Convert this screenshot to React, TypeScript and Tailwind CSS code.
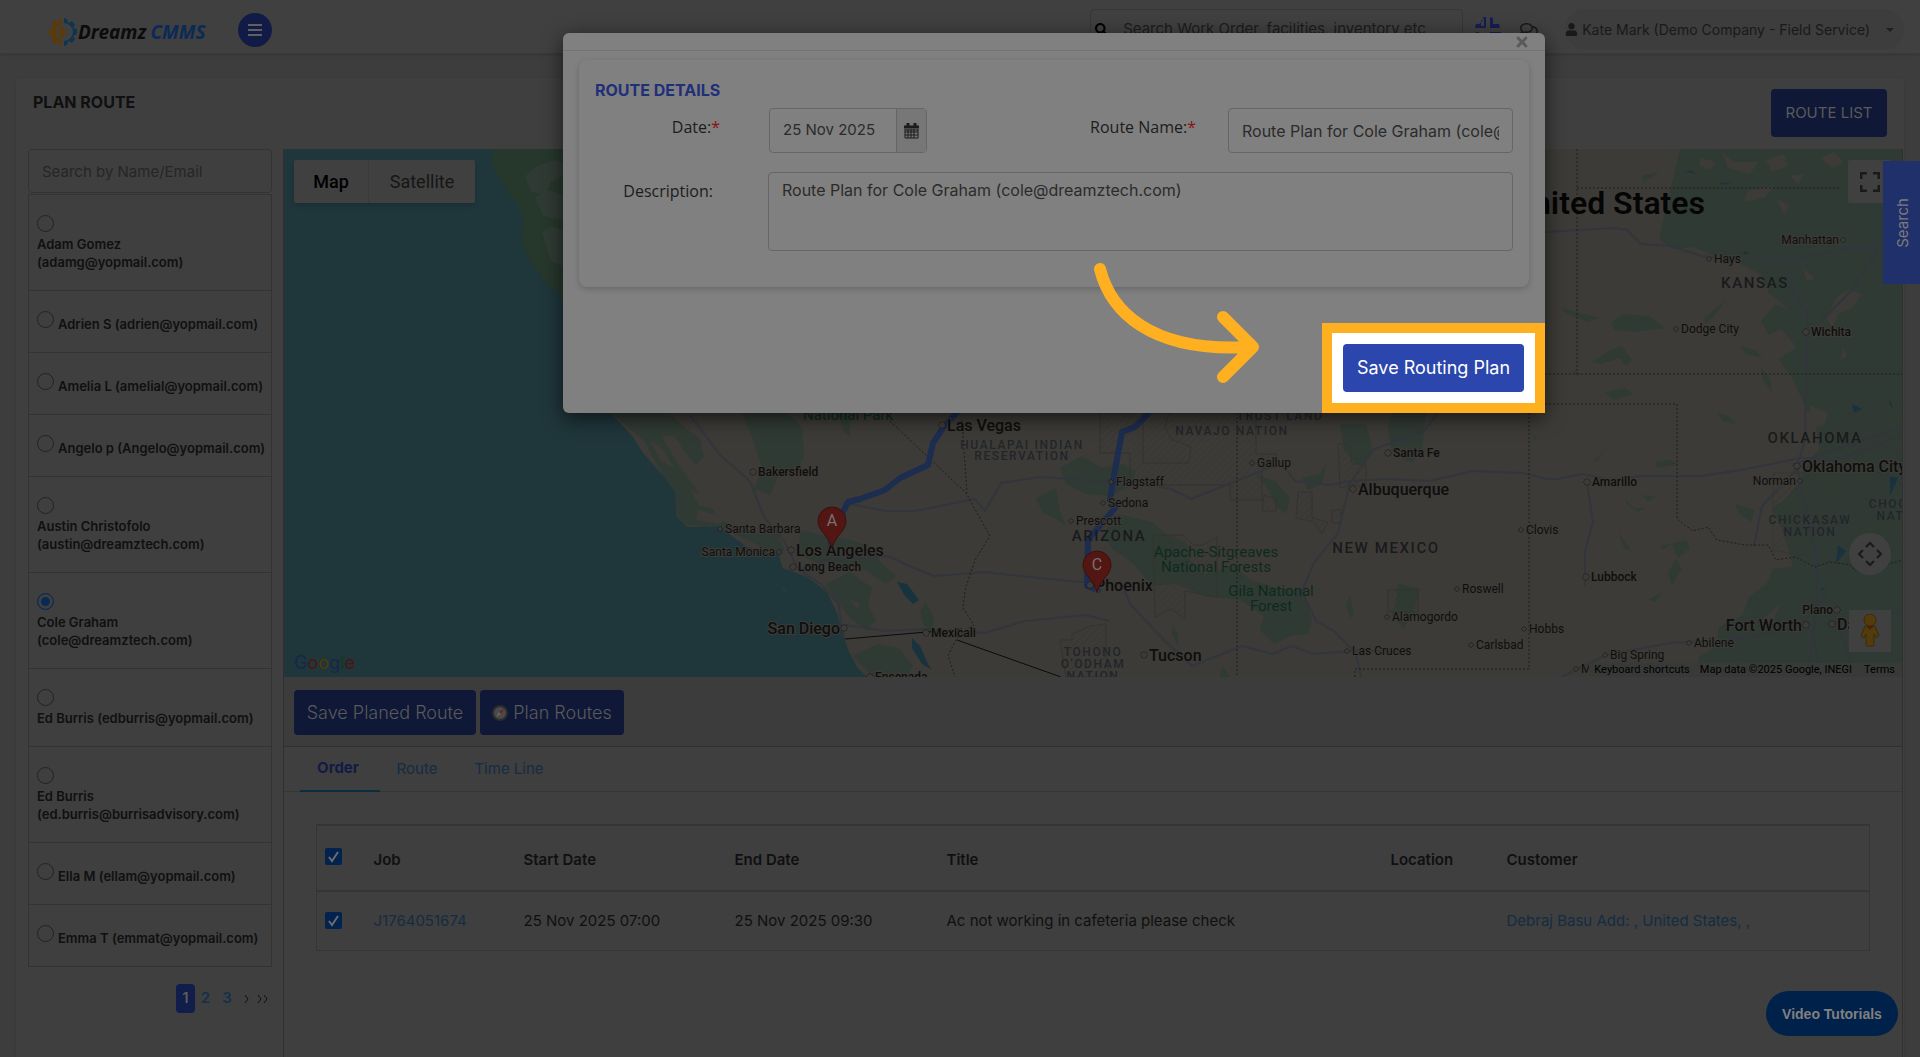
import { FC, ReactNode } from 'react';
import { FaRegComments, FaSearch, FaTimes, FaUser } from 'react-icons/fa';

type Person = { id: string; lines: string[]; stacked?: boolean; selected?: boolean };

const people: Person[] = [
  { id: 'adam', lines: ['Adam Gomez', '(adamg@yopmail.com)'], stacked: true },
  { id: 'adrien', lines: ['Adrien S (adrien@yopmail.com)'] },
  { id: 'amelia', lines: ['Amelia L (amelial@yopmail.com)'] },
  { id: 'angelo', lines: ['Angelo p (Angelo@yopmail.com)'] },
  { id: 'austin', lines: ['Austin Christofolo', '(austin@dreamztech.com)'], stacked: true },
  { id: 'cole', lines: ['Cole Graham', '(cole@dreamztech.com)'], stacked: true, selected: true },
  { id: 'edburris', lines: ['Ed Burris (edburris@yopmail.com)'], stacked: true },
  { id: 'ed', lines: ['Ed Burris', '(ed.burris@burrisadvisory.com)'], stacked: true },
  { id: 'ella', lines: ['Ella M (ellam@yopmail.com)'] },
  { id: 'emma', lines: ['Emma T (emmat@yopmail.com)'] },
];

// x is the marker centre; labels sit right of it, or left when `left` is set
type City = { x: number; y: number; name: string; size: number; bold?: boolean; left?: boolean };

const cities: City[] = [
  { x: 942, y: 425, name: 'Las Vegas', size: 16, bold: true },
  { x: 753, y: 472, name: 'Bakersfield', size: 12, bold: true },
  { x: 720, y: 529, name: 'Santa Barbara', size: 12 },
  { x: 779, y: 552, name: 'Santa Monica', size: 12, left: true },
  { x: 791, y: 550, name: 'Los Angeles', size: 16, bold: true },
  { x: 793, y: 567, name: 'Long Beach', size: 12, bold: true },
  { x: 844, y: 628, name: 'San Diego', size: 16, bold: true, left: true },
  { x: 926, y: 633, name: 'Mexicali', size: 12, bold: true },
  { x: 870, y: 677, name: 'Ensenada', size: 12, bold: true },
  { x: 1111, y: 482, name: 'Flagstaff', size: 12 },
  { x: 1103, y: 503, name: 'Sedona', size: 12 },
  { x: 1071, y: 521, name: 'Prescott', size: 12 },
  { x: 1090, y: 585, name: 'Phoenix', size: 16, bold: true },
  { x: 1144, y: 655, name: 'Tucson', size: 16, bold: true },
  { x: 1252, y: 463, name: 'Gallup', size: 12 },
  { x: 1388, y: 453, name: 'Santa Fe', size: 12, bold: true },
  { x: 1353, y: 489, name: 'Albuquerque', size: 16, bold: true },
  { x: 1457, y: 589, name: 'Roswell', size: 12 },
  { x: 1387, y: 617, name: 'Alamogordo', size: 12 },
  { x: 1347, y: 651, name: 'Las Cruces', size: 12 },
  { x: 1471, y: 645, name: 'Carlsbad', size: 12 },
  { x: 1524, y: 629, name: 'Hobbs', size: 12 },
  { x: 1521, y: 530, name: 'Clovis', size: 12 },
  { x: 1587, y: 482, name: 'Amarillo', size: 12, bold: true },
  { x: 1586, y: 577, name: 'Lubbock', size: 12, bold: true },
  { x: 1605, y: 655, name: 'Big Spring', size: 12 },
  { x: 1576, y: 669, name: 'Mi', size: 12 },
  { x: 1689, y: 643, name: 'Abilene', size: 12 },
  { x: 1806, y: 625, name: 'Fort Worth', size: 16, bold: true, left: true },
  { x: 1832, y: 624, name: 'Dallas', size: 16, bold: true },
  { x: 1837, y: 610, name: 'Plano', size: 12, bold: true, left: true },
  { x: 1797, y: 466, name: 'Oklahoma City', size: 16, bold: true },
  { x: 1800, y: 481, name: 'Norman', size: 12, left: true },
  { x: 1709, y: 259, name: 'Hays', size: 12 },
  { x: 1843, y: 240, name: 'Manhattan', size: 12, left: true },
  { x: 1676, y: 329, name: 'Dodge City', size: 12 },
  { x: 1806, y: 332, name: 'Wichita', size: 12, bold: true },
];

const regions = [
  { x: 1755, y: 288, name: 'KANSAS', size: 15, fill: '#191a1c' },
  { x: 1815, y: 443, name: 'OKLAHOMA', size: 15, fill: '#191a1c' },
  { x: 1386, y: 553, name: 'NEW MEXICO', size: 15, fill: '#191a1c' },
  { x: 1109, y: 541, name: 'ARIZONA', size: 15, fill: '#191a1c' },
  { x: 1022, y: 449, name: 'HUALAPAI INDIAN', size: 12, fill: '#22252a' },
  { x: 1022, y: 460, name: 'RESERVATION', size: 12, fill: '#22252a' },
  { x: 1232, y: 435, name: 'NAVAJO NATION', size: 12, fill: '#22252a' },
  { x: 1280, y: 420, name: 'TRUST LAND', size: 12, fill: '#22252a' },
  { x: 1093, y: 656, name: 'TOHONO', size: 12, fill: '#22252a' },
  { x: 1093, y: 668, name: "O'ODHAM", size: 12, fill: '#22252a' },
  { x: 1093, y: 680, name: 'NATION', size: 12, fill: '#22252a' },
  { x: 1810, y: 524, name: 'CHICKASAW', size: 12, fill: '#22252a' },
  { x: 1810, y: 536, name: 'NATION', size: 12, fill: '#22252a' },
  { x: 1903, y: 508, name: 'CHOCTAW', size: 12, fill: '#22252a' },
  { x: 1903, y: 520, name: 'NATION', size: 12, fill: '#22252a' },
];

const forests = [
  { x: 1216, y: 557, name: 'Apache-Sitgreaves' },
  { x: 1216, y: 572, name: 'National Forests' },
  { x: 1271, y: 596, name: 'Gila National' },
  { x: 1271, y: 611, name: 'Forest' },
];

const Pin: FC<{ x: number; y: number; letter: string }> = ({ x, y, letter }) => (
  <g>
    <path
      d={`M${x} ${y + 27}C${x - 3} ${y + 15} ${x - 14} ${y + 10} ${x - 14} ${y}a14 14 0 0 1 28 0C${x + 14} ${y + 10} ${x + 3} ${y + 15} ${x} ${y + 27}z`}
      fill="#531612"
      stroke="#3a0f0c"
    />
    <text x={x} y={y + 5} textAnchor="middle" fontSize="16" fill="#727272">
      {letter}
    </text>
  </g>
);

const MapDrawing: FC = () => (
  <svg
    className="block w-full h-[528px] bg-[#3d3b37] font-['Roboto',sans-serif]"
    viewBox="284 149 1619 528"
    preserveAspectRatio="xMinYMin slice"
    role="img"
    aria-label="Route map"
  >
    <defs>
      <pattern id="hatch" width="5" height="5" patternUnits="userSpaceOnUse" patternTransform="rotate(45)">
        <path d="M0 0v5" stroke="#34342f" strokeWidth="1" />
      </pattern>
    </defs>

    {/* forests and farmland */}
    <g fill="#303a34">
      <path d="M490 149h80v270l-60-130z" fill="#26372c" />
      <path d="M525 176l12-10 18-6 8 2v14l-12 6-6 12-14-2zM535 198l12-8 16 4v26l-20-4zM542 232l10-6 11 4v36l-12-4z" />
      <path d="M612 413h58l14 14 16 12 4 18-8 8-12-14-10-16-12 2 18 30 22 30 20 24 28 12 26-2 8 18-6 14-20-18-34-16-40-4-16-14-4-34-20-36z" />
      <path d="M742 413h46l14 14 2 30-10 18-16 2-8 18-16-6 8-22-10-30zM838 413h12v24l-6-6zM800 530l26 6 24 4 24 8 6 14 16 14-10 8-20-14-22-6-28-2-18-8zM826 584l24-12 22 16-4 18 8 14-10 10-18-14-10-14zM853 656l24-12 22 4 14 18-6 11h-34zM926 602l8 16-2 12-8-4-4-14z" />
      <path d="M1060 468l22-12 20 12 22-4 12 8-6 14-20 10-24-2-20-10zM1036 498l20-10 4 24 6 14-12-8-12-6zM1118 514l34 8 14 12 20 8 4 18 16 14 28-8 16 14 28 8 26 2 8 30-4 14-18 2-16 8-14-14 4-14-24-16-36-4-28-12-24 2-18-22-20-14-12-14zM1340 424h26l6 24-6 14-10 2-12-14zM1392 413h34l-4 38-10 12-20-10-4-24zM1398 583l22 6-6 20-10 20-12-14 4-14zM1350 596l4 18-4 4-4-14zM1256 474l20 8 14 16-4 16-10-8-6-14zM1302 478l18-4 6-10-4 20-14 6zM1172 624l6 10v12l-6-12zM1222 666l8 11h-10z" />
      <path d="M1680 149h223v528h-206l2-20 18-12 2-18 24-12 6-18 18-14 6-14 20-2-6-22-8-24-8-12 12-8 16-18 6-16 14-18-4-28-10-14-12-28-14-20 18-12-16-18-12 6-8-14 14-16 14 4-20-16-8-18-22-12-22-6-24-10-20 2-14-10z" />
      <path d="M1642 176l18-4-16 10zM1660 228l22-6-8 8 8 4-20-2zM1562 308l38 10-12 4-24-10zM1611 322l12-8 26 2 16 12-30 4-20-2zM1592 362l18-12 12-4 10 14-6 6-6-8-20 6zM1605 392l20-4 8 6-20 6zM1704 318l22-18-12 16-8 8zM1740 346l16 4 6 8-16-4zM1760 366l10 12 2 14-8-10zM1655 462l14-2 10 4-22 4zM1626 500l8 8 10 0-6 4-12-8zM1642 495l14 2-8 4zM1618 532l14 20-8-4zM1660 546l26-6 4 8-12 10-6-14-10 6zM1648 600l14-8-6 10zM1716 412l12 4 8 8-12-2zM1735 504l20 6-4 12-12-8zM1572 370l10 4-6 2zM1530 432l8 6-4 2zM1594 460l10-10-8 12zM1668 573l8-14 6 10-10 16z" />
    </g>

    {/* clearings inside the farmland */}
    <g fill="#3d3b37">
      <path d="M1700 158l16 4-6 8-10-4zM1722 152l12 10 24 0-8 12-22-6zM1766 160l18-6 4 12-16 6zM1820 158l14-6 10 10-12 6zM1748 190l26-4-10 12-20 4zM1790 176l14-2-6 10zM1776 198l14 8-6 8zM1803 268l12 10-8 4zM1826 316l12-20 10-6 14 4-10 14-14 6-6 14zM1843 346l4 10-6 4zM1810 405l18 8-4 12-14 4zM1784 456l10 8-2 6zM1762 620l18-16-8 20zM1738 661l10 6-8 4z" />
      <path d="M650 440l14 10 10 18-14-8zM690 490l14 6 8 12-12-2zM698 510l30 8-8 6-24-4zM850 600l10 4-2 6z" />
    </g>

    {/* tribal lands */}
    <g fill="url(#hatch)" stroke="#33332f">
      <path d="M1100 413v40h30v32h100v15h32v-32h14v-14h-20v-41zM1143 413v50h46l2-16-20-8-6-12 4-14zM1153 535h30l10 10h10l14-8v60l-32-6v28l-14-10-16 8z" />
      <path d="M1060 640h12v-6l18-8 16-2v34l4 19h-44l-4-24z" />
      <path d="M1338 444h12l2 20h14v26l-12-6-14 4zM1298 492h14v26l16 4-6 12-8-12-18-4zM1264 495l12 4v12h-14zM1332 510h9v13h-9zM1388 590h30v22h-30z" />
    </g>
    <path d="M1773 473h130v75l-60 16-70-14z" fill="url(#hatch)" stroke="#333833" />
    <path d="M1841 402h62v70h-62zM1834 425v75" fill="url(#hatch)" stroke="#333833" />

    {/* ocean and lakes */}
    <path
      d="M284 149h209l-1 16 13 23 13 17 5 17-2 18 7 18 10 14 10 13 12 10 20 60 33 60 20 22 10 16 22 25 10 14 1 25 11 10h33l13 10 14 10 30 5 6 16 24 9 20 15 10 21 6 20 5 17 9 17 11 11H284z"
      fill="#1f363b"
    />
    <path d="M700 553l6 2-6 3zM780 585l8 6-4 3zM775 611l8 10-4-3z" fill="#2a3a33" />
    <g fill="#18333d">
      <path d="M897 582l10 2 12 16-6 4-8-8zM912 638l8 8 8 18 4 6-10-6-10-16zM1743 254h6l-4-3zM1684 171l12 3-4-3zM1720 183l12-1-10 3zM1852 404l10 5-8 4zM1890 476l8 2-8 18zM1838 545l8 6-10 12zM1820 590l6-4-4 5zM1890 400l3 8-4-4z" />
    </g>

    {/* highways */}
    <g fill="none" stroke="#32353c" strokeWidth="2">
      <path d="M690 415l30 40 30 26 14 36 20 24 14 28 24 16 16 18 6 34M845 503l40 8 30 0 60-12 10 12 16-28 40-6 60 4 30 0 40 8 20 10 40-16 50-20 14 18 36 4 18-4 40-2 40 2 44-10 50 2 24 6h10l26-5 28 6 30-4h60l40-6 60-12 34 2 40-14 30-12" />
      <path d="M798 570l30-10 60-4 26 12 20 8 50-4 54 6 44 4 40 2 8 20 34 36 28 26 50-20 30 8 20-8 22 8 40-3 44 0M845 625l40 6 40-2 60 4 40-12 60-6 24 6M1358 655l-24-24-18-10-14-30 12-28 24-30 12-50 24-34 50-18 20-26v-18M1355 650l6 27M1587 482l6 40-8 30v34M1562 677l44-22 64-12 70-4 60-12 30-40" />
      <path d="M1545 232l70-4 12 2 14 14 30 2 30 10 40 4h50l60-12h30M1792 262v30l15 18-2 130-8 26 8 40 12 50v50l-8 60M1820 322l30-30 34-50M1800 466l-38 40-8 40M1792 465l40-14 70-24M1810 625l40-4 53-10M1812 630l10 47M1840 628l16 49" />
    </g>
    <path d="M845 639l117-10M957 640l104 37" stroke="#0b0b0b" strokeWidth="1" fill="none" />

    {/* state borders */}
    <g fill="none" stroke="#1e1e1c" strokeDasharray="2 2">
      <path d="M1577 149v225M1577 188h262M1529 374h374M1529 404h148v115l16 12 15-4 9 13 28 5h23l8 15 19-3 20 10 15-5 20 3 5 5 30-5 18-5M1529 413v256h-174v8M1237 413v264M890 421l76 72 24 43-15 24-10 30-2 18 11 17-14 8-12 22 7 22M962 420l5 73" />
    </g>

    {/* planned route */}
    <g fill="none" stroke="#1c2d50" strokeWidth="6" strokeLinecap="round" strokeLinejoin="round">
      <path d="M831 546v-14l12-20 5-10 12-3 25-9 15-12 28-13 5-22 10-15 14-16" />
      <path d="M1150 412l-15 15-13 5-7 38-5 30 5 8-27 32-1 46 11 4" />
    </g>

    <g stroke="#3d3b37" strokeWidth="2" paintOrder="stroke" fill="#0e0e0e">
      {cities.map((c) => (
        <g key={c.name}>
          <circle cx={c.x} cy={c.y} r={c.bold ? 3 : 2} fill="#3d3b37" stroke="#0e0e0e" strokeWidth="1" />
          <text
            x={c.left ? c.x - 4 : c.x + 5}
            y={c.y + (c.size > 12 ? 6 : 4)}
            fontSize={c.size}
            fontWeight={c.bold ? 500 : 400}
            textAnchor={c.left ? 'end' : 'start'}
          >
            {c.name}
          </text>
        </g>
      ))}
    </g>
    <g textAnchor="middle" className="tracking-widest">
      {regions.map((r) => (
        <text key={r.name + r.x + r.y} x={r.x} y={r.y} fontSize={r.size} fontWeight="500" fill={r.fill}>
          {r.name}
        </text>
      ))}
    </g>
    <g textAnchor="middle" fontSize="15" fill="#0d2a1e">
      {forests.map((f) => (
        <text key={f.name} x={f.x} y={f.y}>
          {f.name}
        </text>
      ))}
      <text x="848" y="420">National Park</text>
    </g>
    <text x="1705" y="214" textAnchor="end" fontSize="32" fontWeight="600" fill="#050505">
      United States
    </text>

    <Pin x={832} y={521} letter="A" />
    <Pin x={1097} y={565} letter="C" />
  </svg>
);

const MapPanel: FC = () => (
  <div className="relative overflow-hidden font-['Roboto',sans-serif]">
    <MapDrawing />
    <div className="absolute left-[10px] top-[11px] flex h-[43px] rounded-xs bg-[#404040] text-lg shadow-md">
      <button className="w-[75px] border-r border-[#3a3a3a] font-medium text-black">Map</button>
      <button className="w-[106px] text-[#161616]">Satellite</button>
    </div>
    <button aria-label="Toggle fullscreen view" className="absolute right-[11px] top-[11px] flex size-[43px] items-center justify-center rounded-xs bg-[#404040]">
      <svg width="20" height="20" viewBox="0 0 20 20" fill="none" stroke="#1a1a1a" strokeWidth="3">
        <path d="M1 7V1h6M13 1h6v6M19 13v6h-6M7 19H1v-6" />
      </svg>
    </button>
    <button aria-label="Map camera controls" className="absolute right-[11px] top-[384px] flex size-[42px] items-center justify-center rounded-full bg-[#404040]">
      <svg width="26" height="26" viewBox="0 0 26 26" fill="none" stroke="#1a1a1a" strokeWidth="2">
        <path d="M9 6l4-4 4 4M9 20l4 4 4-4M6 9l-4 4 4 4M20 9l4 4-4 4" />
      </svg>
    </button>
    <button aria-label="Street View Pegman" className="absolute right-[11px] top-[461px] flex size-[42px] items-center justify-center bg-[#404040]">
      <svg width="20" height="34" viewBox="0 0 20 34">
        <path d="M5 12h10l4 10-3 2-2-4v12H6V20l-2 4-3-2z" fill="#523c0c" stroke="#3c2a08" />
        <path d="M6 12h8l-4 4z" fill="#4a200a" />
        <circle cx="10" cy="6" r="6" fill="#523c0c" stroke="#3c2a08" />
      </svg>
    </button>
    <div className="absolute left-[10px] bottom-[2px] font-['Inter',sans-serif] text-lg leading-6">
      <span className="text-[#17274b]">G</span>
      <span className="text-[#4a1512]">o</span>
      <span className="text-[#4f3a08]">o</span>
      <span className="text-[#17274b]">g</span>
      <span className="text-[#113a1c]">l</span>
      <span className="text-[#4a1512]">e</span>
    </div>
    <div className="absolute right-0 bottom-0 flex h-[14px] items-center bg-[#373a37] text-[11px] leading-[14px] text-black">
      <button className="px-[5px]">Keyboard shortcuts</button>
      <span className="px-[5px]">Map data ©2025 Google, INEGI</span>
      <a href="#terms" className="px-[7px]">Terms</a>
    </div>
  </div>
);

const Logo: FC = () => (
  <a href="#home" aria-label="Dreamz CMMS" className="flex items-center font-['Noto_Sans',sans-serif] text-[19px] leading-[30px] font-bold italic">
    <svg width="30" height="30" viewBox="0 0 30 30" fill="none">
      <path d="M14 1v28l-3-1-1-4-4 2-3-3 2-4-4-1v-5l4-1-2-4 3-4 4 2 1-4z" fill="#5b3a09" />
      <path d="M16 1l3 1 1 4 4-2 3 4-2 3 4 1v5l-4 2 2 3-3 4-4-2-1 4-3 1v-5a9 9 0 0 0 0-18z" fill="#0b3553" />
      <circle cx="14" cy="15" r="7" fill="#404040" />
      <path d="M7 15h9M12 11a4 4 0 1 1 0 8" stroke="#5b3a09" strokeWidth="3" />
    </svg>
    <span className="text-[#0c0c0c]">Dreamz</span>
    <span className="ml-1 text-[#0b2a55]">CMMS</span>
  </a>
);

const Header: FC = () => (
  <header className="flex h-[54px] items-start justify-between border-b border-[#393939] bg-[#404040] pl-12 pr-4 shadow-sm">
    <div className="flex items-center pt-[13px]">
      <div className="w-[190px] pt-1">
        <Logo />
      </div>
      <button aria-label="Toggle menu" className="flex size-[34px] items-center justify-center rounded-full bg-[#111b45]">
        <span className="flex w-[14px] flex-col gap-[3px]">
          <span className="h-[2px] bg-[#606060]" />
          <span className="h-[2px] bg-[#606060]" />
          <span className="h-[2px] bg-[#606060]" />
        </span>
      </button>
    </div>
    <div className="flex pt-[9px]">
      <label className="flex h-[41px] w-[373px] items-center gap-[15px] rounded border border-[#363636] px-1">
        <FaSearch className="size-[13px] flex-none text-black" />
        <span className="sr-only">Search</span>
        <input className="w-full text-[15px] outline-none placeholder:text-[#1c1c1c]" placeholder="Search Work Order, facilities, inventory etc" />
      </label>
      <svg className="mt-2 ml-3 size-[26px]" viewBox="0 0 26 26" fill="#131f52">
        <path d="M8 0h3v11H0c0-2 1-3 1-4h3c2-1 3-3 4-4zM6 4v5h3V1zM15 0l3 1v6h6l1 4H15zM1 15h3v3H1zM15 15h11v3h-8v7h-3zM8 18h3v7H8z" fillRule="evenodd" />
      </svg>
      <FaRegComments className="mt-3 ml-[19px] size-[18px] text-[#1a1a1a]" />
      <button className="ml-[27px] flex h-[41px] items-center rounded-full bg-[#3d3d3d] pr-[10px] text-[15px] text-[#191919]">
        <FaUser className="mr-1 size-[13px]" />
        <span className="text-[14px]">Kate Mark (Demo Company - Field Service)</span>
        <span className="ml-4 border-x-4 border-t-4 border-x-transparent border-t-[#1c2026]" />
      </button>
    </div>
  </header>
);

const PersonRow: FC<{ person: Person }> = ({ person }) => (
  <li className="border-b border-[#333333] px-2 pt-5 pb-[19px]">
    <label className={person.stacked ? 'flex flex-col gap-[3px]' : 'flex gap-[4px]'}>
      <input
        type="radio"
        name="person"
        defaultChecked={person.selected}
        className="size-[17px] flex-none appearance-none rounded-full border border-[#222222] checked:border-[#0b2a52] checked:bg-[#0b2a52] checked:shadow-[inset_0_0_0_3px_#3f3f3f]"
      />
      <span className={person.stacked ? 'text-[13px] leading-[18px] font-semibold' : 'pt-1 text-[13px] leading-[18px] font-semibold whitespace-nowrap'}>
        {person.lines.map((line) => (
          <span key={line} className="block">{line}</span>
        ))}
      </span>
    </label>
  </li>
);

const PeopleList: FC = () => (
  <aside className="w-[244px] flex-none">
    <input
      aria-label="Search by Name/Email"
      placeholder="Search by Name/Email"
      className="block h-[44px] w-full rounded border border-[#333333] px-[13px] text-[15px] outline-none placeholder:text-[#262626]"
    />
    <ul className="mt-px border-x border-t border-[#333333]">
      {people.map((person) => (
        <PersonRow key={person.id} person={person} />
      ))}
    </ul>
    <nav aria-label="Pages" className="mt-[17px] flex items-center justify-end pr-[2px] text-[15px] font-semibold text-[#15304a]">
      <button className="h-[29px] w-[19px] rounded bg-[#111d4a] text-[#5c5c5c]">1</button>
      <button className="w-[21px]">2</button>
      <button className="w-[22px]">3</button>
      <button aria-label="Next" className="flex w-[18px] justify-center">
        <svg width="6" height="10" viewBox="0 0 6 10" fill="none" stroke="#101010"><path d="M1 1l3 4-3 4" /></svg>
      </button>
      <button aria-label="Last" className="flex w-[14px] justify-center">
        <svg width="12" height="10" viewBox="0 0 12 10" fill="none" stroke="#101010"><path d="M1 1l3 4-3 4M7 1l3 4-3 4" /></svg>
      </button>
    </nav>
  </aside>
);

const Tick: FC<{ label: string }> = ({ label }) => (
  <label className="relative block size-[17px]">
    <input type="checkbox" aria-label={label} defaultChecked className="block size-[17px] appearance-none rounded-xs bg-[#02234d]" />
    <svg className="pointer-events-none absolute inset-0" width="17" height="17" viewBox="0 0 17 17" fill="none" stroke="#6c6c6c" strokeWidth="2">
      <path d="M4 9l3 4 6-9" />
    </svg>
  </label>
);

const BlueButton: FC<{ children: ReactNode; className: string }> = ({ children, className }) => (
  <button className={`flex items-center justify-center rounded bg-[#0f1837] text-[#5a5a5a] ${className}`}>{children}</button>
);

const JobTable: FC = () => (
  <table className="w-full table-fixed border border-[#353535] text-left text-[15px]">
    <colgroup>
      <col className="w-[49px]" />
      <col className="w-[150px]" />
      <col className="w-[211px]" />
      <col className="w-[212px]" />
      <col />
      <col className="w-[116px]" />
      <col className="w-[371px]" />
    </colgroup>
    <thead>
      <tr className="h-[66px] border-y-2 border-[#353535]">
        <th className="px-2"><div className="pb-1"><Tick label="Select all jobs" /></div></th>
        <th className="px-2 pt-1 font-semibold">Job</th>
        <th className="px-2 pt-1 font-semibold">Start Date</th>
        <th className="px-2 pt-1 font-semibold">End Date</th>
        <th className="px-2 pt-1 font-semibold">Title</th>
        <th className="px-2 pt-1 font-semibold">Location</th>
        <th className="px-2 pt-1 font-semibold">Customer</th>
      </tr>
    </thead>
    <tbody>
      <tr className="h-[59px]">
        <td className="px-2"><Tick label="Select job J1764051674" /></td>
        <td className="px-2"><a href="#job" className="text-[#152c42]">J1764051674</a></td>
        <td className="px-2">25 Nov 2025 07:00</td>
        <td className="px-2">25 Nov 2025 09:30</td>
        <td className="px-2">Ac not working in cafeteria please check</td>
        <td className="px-2" />
        <td className="px-2"><a href="#customer" className="text-[#152c42]">Debraj Basu Add: , United States, ,</a></td>
      </tr>
    </tbody>
  </table>
);

const CalendarIcon: FC = () => (
  <svg width="15" height="16" viewBox="0 0 15 16" fill="none" stroke="#1c1c1c">
    <path d="M0 4h15M4 0v3M11 0v3" strokeWidth="3" />
    <path d="M1 6v9h13V6M4 6v9M7 6v9M10 6v9M1 9h13M1 12h13M1 7h13" />
  </svg>
);

const RouteDialog: FC = () => (
  <div
    role="dialog"
    aria-label="Route details"
    className="absolute top-[33px] right-[375px] left-[563px] flex flex-col rounded-md bg-[#808080] text-[#1c1c1c] shadow-[0_5px_20px_rgba(0,0,0,0.6)]"
  >
    <div className="flex h-[18px] justify-end border-b border-[#737373] pr-[15px]">
      <button aria-label="Close" className="text-[#595959]"><FaTimes className="size-4" /></button>
    </div>
    <section className="mx-4 mt-[9px] h-[227px] rounded-lg bg-[#808080] px-4 pt-[18px] shadow-[0_2px_6px_rgba(0,0,0,0.2)]">
      <h2 className="text-base leading-6 font-bold text-[#1f2f78]">ROUTE DETAILS</h2>
      <div className="mt-[6px] grid grid-cols-[125px_1fr_285px] font-['Open_Sans',sans-serif] text-base">
        <label htmlFor="date" className="pt-[7px] text-right">Date:<span className="text-[#8a1010]">*</span></label>
        <div className="flex items-start justify-between pl-[49px] pr-[32px]">
          <div className="flex h-[45px] w-[158px] rounded border border-[#666666]">
            <input id="date" defaultValue="25 Nov 2025" className="min-w-0 flex-1 pl-[13px] font-['Inter',sans-serif] text-[15px] text-[#2b2b2b] outline-none" />
            <button aria-label="Pick a date" className="flex w-[30px] items-center justify-center border-l border-[#666666] bg-[#777777]">
              <CalendarIcon />
            </button>
          </div>
          <label htmlFor="route-name" className="pt-[7px]">Route Name:<span className="text-[#8a1010]">*</span></label>
        </div>
        <input
          id="route-name"
          defaultValue="Route Plan for Cole Graham (cole@dreamztech.com)"
          className="h-[45px] min-w-0 rounded border border-[#666666] px-[13px] font-['Inter',sans-serif] text-base text-[#2b2b2b] outline-none"
        />
      </div>
      <div className="mt-[19px] flex gap-[55px]">
        <label htmlFor="description" className="w-[118px] flex-none pt-[7px] text-right font-['Open_Sans',sans-serif] text-base">Description:</label>
        <textarea
          id="description"
          defaultValue="Route Plan for Cole Graham (cole@dreamztech.com)"
          className="h-[79px] flex-1 resize-none rounded border border-[#666666] px-[13px] pt-[5px] text-base text-[#2b2b2b] outline-none"
        />
      </div>
    </section>
    <div className="mt-[36px] flex justify-end">
      <div className="border-[10px] border-[#ffb020] bg-white p-[11px]">
        <button className="h-[48px] w-[181px] rounded bg-[#2b46ad] text-lg text-white">Save Routing Plan</button>
      </div>
    </div>
    <svg className="pointer-events-none absolute top-[229px] right-[282px]" width="170" height="126" viewBox="1093 262 170 126" fill="none" stroke="#ffb020" strokeWidth="12" strokeLinecap="round" strokeLinejoin="round">
      <path d="M1100 269c10 40 48 84 150 78M1223 317l30 30-30 30" />
    </svg>
  </div>
);

export default function App() {
  return (
    <div className="relative flex min-h-screen flex-col overflow-hidden bg-[#3d3d3d] font-['Inter',sans-serif] text-[#101010]">
      <Header />
      <main className="mx-4 mt-6 flex flex-1 flex-col rounded-t bg-[#3f3f3f] pr-px pl-3 shadow-sm">
        <div className="flex h-[71px] items-start justify-between pl-[5px] pr-4">
          <h1 className="pt-[12px] text-base leading-6 font-bold">PLAN ROUTE</h1>
          <BlueButton className="mt-[11px] h-[48px] w-[116px] text-[15px]">ROUTE LIST</BlueButton>
        </div>
        <div className="flex flex-1 gap-[11px]">
          <PeopleList />
          <div className="min-w-0 flex-1 border-x border-[#303030]">
            <MapPanel />
            <div className="flex gap-1 border-b border-[#303030] bg-[#3c3c3c] px-[10px] pt-[13px] pb-[11px]">
              <BlueButton className="h-[45px] w-[182px] text-lg font-light">Save Planed Route</BlueButton>
              <BlueButton className="h-[45px] w-[144px] gap-1 text-lg font-light">
                <svg width="17" height="17" viewBox="0 0 17 17">
                  <circle cx="8" cy="9" r="7" fill="#4a4a4a" stroke="#2c2c2c" strokeWidth="2" />
                  <path d="M12 5L9 10 7 8z" fill="#6e1d1d" />
                  <path d="M4 13l3-5 2 2z" fill="#666666" />
                </svg>
                Plan Routes
              </BlueButton>
            </div>
            <div role="tablist" className="flex h-[45px] border-b border-[#363636] pl-4 text-[15px] text-[#152c42]">
              <button role="tab" aria-selected="true" className="h-[45px] w-[80px] border-b-2 border-[#0c2c3f] pr-1 font-bold text-[#121b45]">Order</button>
              <button role="tab" className="w-[74px]">Route</button>
              <button role="tab" className="w-[110px]">Time Line</button>
            </div>
            <div className="px-8 pt-8">
              <JobTable />
            </div>
          </div>
        </div>
      </main>
      <button className="absolute top-[161px] right-0 flex h-[123px] w-[37px] items-center justify-center bg-[#20306b] pl-1 text-[15px] text-[#7c7c7c]">
        <span className="rotate-180 [writing-mode:vertical-rl]">Search</span>
      </button>
      <RouteDialog />
      <a href="#videos" className="absolute right-[22px] bottom-[21px] flex h-[45px] w-[132px] items-center justify-center rounded-full bg-[#00224a] font-['Liberation_Sans',sans-serif] text-sm font-bold text-[#808080]">
        Video Tutorials
      </a>
    </div>
  );
}
